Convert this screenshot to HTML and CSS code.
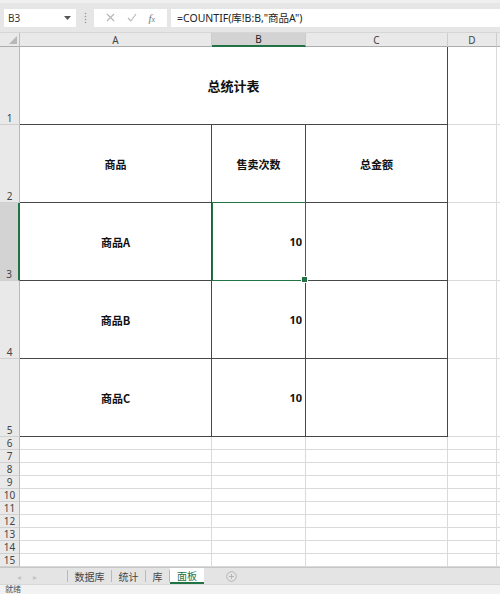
FILE: index.html
```html
<!DOCTYPE html>
<html lang="zh">
<head>
<meta charset="utf-8">
<title>总统计表</title>
<link rel="stylesheet" href="styles.css">
</head>
<body>
<div class="app">
  <div class="fbar">
    <div class="namebox">
      <span class="name">B3</span>
      <svg class="dd" width="7" height="4" viewBox="0 0 7 4"><path d="M0 0h7L3.5 4z" fill="#555"/></svg>
    </div>
    <div class="grip">
      <svg width="3" height="12" viewBox="0 0 3 12"><circle cx="1.5" cy="1.5" r="0.8" fill="#999"/><circle cx="1.5" cy="4.5" r="0.8" fill="#999"/><circle cx="1.5" cy="7.5" r="0.8" fill="#999"/><circle cx="1.5" cy="10.5" r="0.8" fill="#999"/></svg>
    </div>
    <div class="fbtns">
      <svg width="9" height="9" viewBox="0 0 9 9"><path d="M1 1L8 8M8 1L1 8" stroke="#b5b5b5" stroke-width="1.1"/></svg>
      <svg width="10" height="9" viewBox="0 0 10 9"><path d="M1 5L3.8 8L9 1" stroke="#b5b5b5" stroke-width="1.1" fill="none"/></svg>
      <span class="fx">f<span class="fxx">x</span></span>
    </div>
    <div class="formula">=COUNTIF(库!B:B,"商品A")</div>
  </div>

  <div class="sheet">
    <div class="corner"><svg width="8" height="8" viewBox="0 0 8 8"><path d="M8 0V8H0z" fill="#b8b8b8"/></svg></div>
    <div class="ch">A</div>
    <div class="ch ch-sel">B</div>
    <div class="ch">C</div>
    <div class="ch">D</div>
    <div class="ch ch-e"></div>

    <div class="rh">1</div>
    <div class="c t title">总统计表</div>
    <div class="c"></div>
    <div class="c e"></div>

    <div class="rh">2</div>
    <div class="c t">商品</div>
    <div class="c t">售卖次数</div>
    <div class="c t">总金额</div>
    <div class="c"></div>
    <div class="c e"></div>

    <div class="rh rh-sel">3</div>
    <div class="c t">商品A</div>
    <div class="c t num sel">10</div>
    <div class="c t"></div>
    <div class="c"></div>
    <div class="c e"></div>

    <div class="rh">4</div>
    <div class="c t">商品B</div>
    <div class="c t num">10</div>
    <div class="c t"></div>
    <div class="c"></div>
    <div class="c e"></div>

    <div class="rh">5</div>
    <div class="c t">商品C</div>
    <div class="c t num">10</div>
    <div class="c t"></div>
    <div class="c"></div>
    <div class="c e"></div>

    <div class="rh">6</div><div class="c"></div><div class="c"></div><div class="c"></div><div class="c"></div><div class="c e"></div>
    <div class="rh">7</div><div class="c"></div><div class="c"></div><div class="c"></div><div class="c"></div><div class="c e"></div>
    <div class="rh">8</div><div class="c"></div><div class="c"></div><div class="c"></div><div class="c"></div><div class="c e"></div>
    <div class="rh">9</div><div class="c"></div><div class="c"></div><div class="c"></div><div class="c"></div><div class="c e"></div>
    <div class="rh">10</div><div class="c"></div><div class="c"></div><div class="c"></div><div class="c"></div><div class="c e"></div>
    <div class="rh">11</div><div class="c"></div><div class="c"></div><div class="c"></div><div class="c"></div><div class="c e"></div>
    <div class="rh">12</div><div class="c"></div><div class="c"></div><div class="c"></div><div class="c"></div><div class="c e"></div>
    <div class="rh">13</div><div class="c"></div><div class="c"></div><div class="c"></div><div class="c"></div><div class="c e"></div>
    <div class="rh">14</div><div class="c"></div><div class="c"></div><div class="c"></div><div class="c"></div><div class="c e"></div>
    <div class="rh">15</div><div class="c"></div><div class="c"></div><div class="c"></div><div class="c"></div><div class="c e"></div>
  </div>

  <div class="tabs">
    <div class="nav"><span>◂</span><span>▸</span></div>
    <div class="tab">数据库</div>
    <div class="tab">统计</div>
    <div class="tab">库</div>
    <div class="tab active">面板</div>
    <div class="add">
      <svg width="11" height="11" viewBox="0 0 11 11"><circle cx="5.5" cy="5.5" r="4.8" fill="none" stroke="#b0b0b0" stroke-width="0.9"/><path d="M5.5 3v5M3 5.5h5" stroke="#b0b0b0" stroke-width="0.9"/></svg>
    </div>
  </div>

  <div class="status">就绪</div>
</div>
</body>
</html>
```

FILE: styles.css
```css
* { box-sizing: border-box; }
html, body { margin: 0; padding: 0; }
body {
  width: 500px;
  height: 594px;
  overflow: hidden;
  background: #ffffff;
  font-family: "Noto Sans", "Noto Sans CJK SC", sans-serif;
  color: #222;
}
.app {
  display: flex;
  flex-direction: column;
  width: 500px;
  height: 594px;
}

/* formula bar */
.fbar {
  height: 33px;
  flex: none;
  display: flex;
  align-items: center;
  background: #e6e6e6;
  border-top: 3px solid #efefef;
  padding-left: 4px;
  border-bottom: 1px solid #d6d6d6;
}
.namebox {
  width: 72px;
  height: 18px;
  background: #fff;
  display: flex;
  align-items: center;
  justify-content: space-between;
  padding: 0 5px 0 4px;
  font-size: 10px;
  color: #333;
}
.dd { display: block; }
.grip {
  width: 18px;
  display: flex;
  justify-content: center;
}
.grip svg { display: block; }
.fbtns {
  width: 73px;
  height: 18px;
  background: #fff;
  display: flex;
  align-items: center;
  justify-content: space-around;
  padding: 0 6px;
  margin-right: 4px;
}
.fx {
  font-family: "Liberation Serif", serif;
  font-style: italic;
  font-size: 11px;
  color: #777;
}
.fxx { font-size: 8px; }
.formula {
  flex: 1;
  height: 18px;
  background: #fff;
  display: flex;
  align-items: center;
  padding-left: 6px;
  font-size: 10.5px;
  color: #222;
  white-space: nowrap;
}

/* sheet grid */
.sheet {
  flex: none;
  display: grid;
  grid-template-columns: 20px 192px 94px 142px 49px 3px;
  grid-template-rows: 14px repeat(5, 78px) repeat(10, 13px);
  height: 534px;
}
.corner {
  background: #e9e9e9;
  border-right: 1px solid #bdbdbd;
  border-bottom: 1px solid #adadad;
  display: flex;
  align-items: flex-end;
  justify-content: flex-end;
  padding: 0 2px 2px 0;
}
.corner svg { display: block; }
.ch {
  background: #e9e9e9;
  border-right: 1px solid #cdcdcd;
  border-bottom: 1px solid #adadad;
  font-size: 10px;
  color: #444;
  display: flex;
  align-items: center;
  justify-content: center;
  line-height: 1;
}
.ch-sel {
  background: #d3d3d3;
  border-bottom: 2px solid #217346;
  color: #222;
}
.ch-e { border-right: none; }
.rh {
  background: #e9e9e9;
  border-right: 1px solid #b9b9b9;
  border-bottom: 1px solid #d0d0d0;
  font-size: 10px;
  line-height: 1;
  color: #444;
  display: flex;
  align-items: flex-end;
  justify-content: center;
  padding-bottom: 1px;
}
.rh-sel {
  background: #d3d3d3;
  border-right: 2px solid #217346;
}
.c {
  border-right: 1px solid #dadada;
  border-bottom: 1px solid #dadada;
  display: flex;
  align-items: center;
  justify-content: center;
  font-size: 11px;
  font-weight: bold;
  font-family: "Noto Sans CJK SC", "Noto Sans", sans-serif;
  color: #111;
  position: relative;
}
.c.e { border-right: none; }
.c.t {
  border-right: 1px solid #474747;
  border-bottom: 1px solid #474747;
}
.c.title {
  grid-column: span 3;
  font-size: 13px;
}
.c.num {
  justify-content: flex-end;
  padding-right: 3px;
  font-family: "Noto Sans", sans-serif;
}
.c.sel {
  z-index: 2;
  outline: 1px solid #217346;
  outline-offset: -1px;
  border-color: #217346;
  margin-top: -1px;
  border-top: 1px solid #217346;
}
.c.sel::after {
  content: "";
  position: absolute;
  right: -3px;
  bottom: -3px;
  width: 5px;
  height: 5px;
  background: #217346;
  border: 1px solid #fff;
}

/* tabs */
.tabs {
  height: 17px;
  flex: none;
  background: #e4e4e4;
  border-top: 1px solid #c6c6c6;
  display: flex;
  align-items: stretch;
  font-size: 10px;
  font-family: "Noto Sans CJK SC", sans-serif;
  color: #444;
}
.nav {
  width: 68px;
  display: flex;
  align-items: center;
  gap: 12px;
  padding-left: 17px;
  color: #c4c4c4;
  font-size: 8px;
  border-right: 1px solid #b9b9b9;
  margin: 2px 0;
}
.tab {
  display: flex;
  align-items: center;
  padding: 0 6.5px;
  border-right: 1px solid #b9b9b9;
  margin: 2px 0;
}
.tab.active {
  background: #fff;
  color: #217346;
  margin: 0;
  border-right: none;
  border-bottom: 2px solid #217346;
  padding: 0 7px;
}
.add {
  display: flex;
  align-items: center;
  padding-left: 22px;
}
.add svg { display: block; }

/* status */
.status {
  flex: 1;
  background: #f2f2f2;
  border-top: 1px solid #d8d8d8;
  font-size: 8px;
  line-height: 1;
  padding: 0 0 0 5px;
  color: #555;
  font-family: "Noto Sans CJK SC", sans-serif;
  overflow: hidden;
}
```
